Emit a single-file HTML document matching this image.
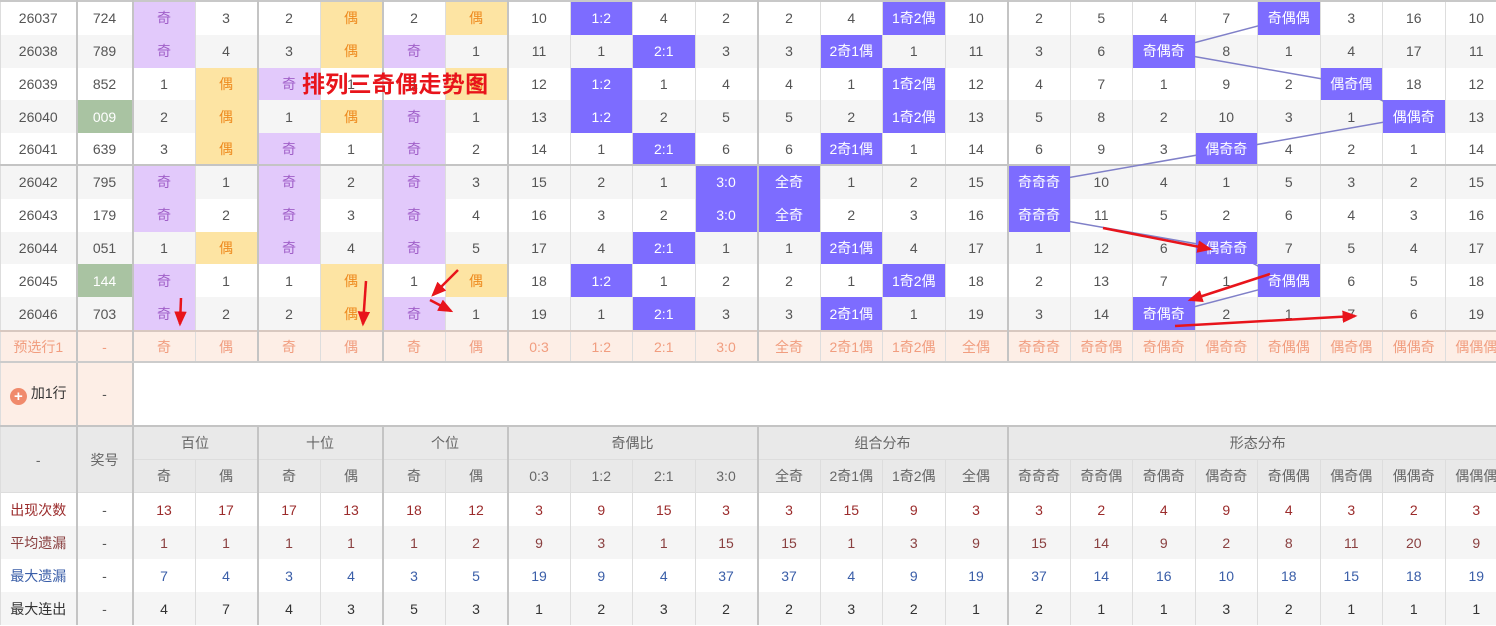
<!DOCTYPE html>
<html><head><meta charset="utf-8"><style>
body{margin:0;width:1496px;height:626px;overflow:hidden;background:#fff;font-family:"Liberation Sans","Noto Sans CJK SC",sans-serif;position:relative}
table{border-collapse:collapse;table-layout:fixed;position:absolute;left:0;top:0;width:1507px;border-top:2px solid #c8c8c8}
td{height:32.8px;padding:0;text-align:center;font-size:14px;color:#555;border:none;border-left:1px solid #ddd;border-right:1px solid #ddd;white-space:nowrap;overflow:hidden}
tr.s td{background:#f5f5f5}
td.L{border-left:2px solid #c4c4c4}
td.p{background:#e2c9fb!important;color:#a05fc8}
td.y{background:#fde4a3!important;color:#ee8a1e}
td.b{background:#7d6cff!important;color:#fff;position:relative;z-index:2}
td.g{background:#a9c3a2!important;color:#fff}
tr.g5 td{border-bottom:2px solid #c4c4c4;height:30.8px}
tr.pre td{background:#fdeee6;color:#f19d7f;border-top:2px solid #d8c8c0;border-bottom:2px solid #ccc;height:29.5px}
tr.h td{background:#e9e9e9;color:#666;border-bottom:1px solid #ddd;height:32px}
tr.st td{height:33px}
.r td{color:#9b2b2b}
.m td{color:#8a4040}
.bl td{color:#3a5ea8}
.k td{color:#333}
.r td:nth-child(2),.m td:nth-child(2),.bl td:nth-child(2),.k td:nth-child(2){color:#555}
svg{position:absolute;left:0;top:0;z-index:1}
svg.t{z-index:5}
</style></head><body>
<table>
<colgroup><col style="width:76px"><col style="width:56px">
<col span="22" style="width:62.5px"></colgroup>
<tr><td>26037</td><td class="L">724</td><td class="L p">奇</td><td>3</td><td class="L">2</td><td class="y">偶</td><td class="L">2</td><td class="y">偶</td><td class="L">10</td><td class="b">1:2</td><td>4</td><td>2</td><td class="L">2</td><td>4</td><td class="b">1奇2偶</td><td>10</td><td class="L">2</td><td>5</td><td>4</td><td>7</td><td class="b">奇偶偶</td><td>3</td><td>16</td><td>10</td></tr>
<tr class="s"><td>26038</td><td class="L">789</td><td class="L p">奇</td><td>4</td><td class="L">3</td><td class="y">偶</td><td class="L p">奇</td><td>1</td><td class="L">11</td><td>1</td><td class="b">2:1</td><td>3</td><td class="L">3</td><td class="b">2奇1偶</td><td>1</td><td>11</td><td class="L">3</td><td>6</td><td class="b">奇偶奇</td><td>8</td><td>1</td><td>4</td><td>17</td><td>11</td></tr>
<tr><td>26039</td><td class="L">852</td><td class="L">1</td><td class="y">偶</td><td class="L p">奇</td><td>1</td><td class="L">1</td><td class="y">偶</td><td class="L">12</td><td class="b">1:2</td><td>1</td><td>4</td><td class="L">4</td><td>1</td><td class="b">1奇2偶</td><td>12</td><td class="L">4</td><td>7</td><td>1</td><td>9</td><td>2</td><td class="b">偶奇偶</td><td>18</td><td>12</td></tr>
<tr class="s"><td>26040</td><td class="L g">009</td><td class="L">2</td><td class="y">偶</td><td class="L">1</td><td class="y">偶</td><td class="L p">奇</td><td>1</td><td class="L">13</td><td class="b">1:2</td><td>2</td><td>5</td><td class="L">5</td><td>2</td><td class="b">1奇2偶</td><td>13</td><td class="L">5</td><td>8</td><td>2</td><td>10</td><td>3</td><td>1</td><td class="b">偶偶奇</td><td>13</td></tr>
<tr class="g5"><td>26041</td><td class="L">639</td><td class="L">3</td><td class="y">偶</td><td class="L p">奇</td><td>1</td><td class="L p">奇</td><td>2</td><td class="L">14</td><td>1</td><td class="b">2:1</td><td>6</td><td class="L">6</td><td class="b">2奇1偶</td><td>1</td><td>14</td><td class="L">6</td><td>9</td><td>3</td><td class="b">偶奇奇</td><td>4</td><td>2</td><td>1</td><td>14</td></tr>
<tr class="s"><td>26042</td><td class="L">795</td><td class="L p">奇</td><td>1</td><td class="L p">奇</td><td>2</td><td class="L p">奇</td><td>3</td><td class="L">15</td><td>2</td><td>1</td><td class="b">3:0</td><td class="L b">全奇</td><td>1</td><td>2</td><td>15</td><td class="L b">奇奇奇</td><td>10</td><td>4</td><td>1</td><td>5</td><td>3</td><td>2</td><td>15</td></tr>
<tr><td>26043</td><td class="L">179</td><td class="L p">奇</td><td>2</td><td class="L p">奇</td><td>3</td><td class="L p">奇</td><td>4</td><td class="L">16</td><td>3</td><td>2</td><td class="b">3:0</td><td class="L b">全奇</td><td>2</td><td>3</td><td>16</td><td class="L b">奇奇奇</td><td>11</td><td>5</td><td>2</td><td>6</td><td>4</td><td>3</td><td>16</td></tr>
<tr class="s"><td>26044</td><td class="L">051</td><td class="L">1</td><td class="y">偶</td><td class="L p">奇</td><td>4</td><td class="L p">奇</td><td>5</td><td class="L">17</td><td>4</td><td class="b">2:1</td><td>1</td><td class="L">1</td><td class="b">2奇1偶</td><td>4</td><td>17</td><td class="L">1</td><td>12</td><td>6</td><td class="b">偶奇奇</td><td>7</td><td>5</td><td>4</td><td>17</td></tr>
<tr><td>26045</td><td class="L g">144</td><td class="L p">奇</td><td>1</td><td class="L">1</td><td class="y">偶</td><td class="L">1</td><td class="y">偶</td><td class="L">18</td><td class="b">1:2</td><td>1</td><td>2</td><td class="L">2</td><td>1</td><td class="b">1奇2偶</td><td>18</td><td class="L">2</td><td>13</td><td>7</td><td>1</td><td class="b">奇偶偶</td><td>6</td><td>5</td><td>18</td></tr>
<tr class="s"><td>26046</td><td class="L">703</td><td class="L p">奇</td><td>2</td><td class="L">2</td><td class="y">偶</td><td class="L p">奇</td><td>1</td><td class="L">19</td><td>1</td><td class="b">2:1</td><td>3</td><td class="L">3</td><td class="b">2奇1偶</td><td>1</td><td>19</td><td class="L">3</td><td>14</td><td class="b">奇偶奇</td><td>2</td><td>1</td><td>7</td><td>6</td><td>19</td></tr>
<tr class="pre"><td>预选行1</td><td class="L">-</td><td class="L">奇</td><td>偶</td><td class="L">奇</td><td>偶</td><td class="L">奇</td><td>偶</td><td class="L">0:3</td><td>1:2</td><td>2:1</td><td>3:0</td><td class="L">全奇</td><td>2奇1偶</td><td>1奇2偶</td><td>全偶</td><td class="L">奇奇奇</td><td>奇奇偶</td><td>奇偶奇</td><td>偶奇奇</td><td>奇偶偶</td><td>偶奇偶</td><td>偶偶奇</td><td>偶偶偶</td></tr>
<tr><td style="height:62px;background:#fdeee6;color:#333;border-bottom:2px solid #c4c4c4"><span style="display:inline-block;width:17px;height:17px;border-radius:50%;background:#f08a6c;color:#fff;font-size:15px;line-height:17px;vertical-align:-3px;margin-right:4px;font-weight:bold">+</span>加1行</td><td class="L" style="background:#fdeee6;border-bottom:2px solid #c4c4c4">-</td><td class="L" colspan="22" style="border-bottom:2px solid #c4c4c4"></td></tr>
<tr class="h"><td rowspan="2">-</td><td class="L" rowspan="2">奖号</td><td class="L" colspan="2">百位</td><td class="L" colspan="2">十位</td><td class="L" colspan="2">个位</td><td class="L" colspan="4">奇偶比</td><td class="L" colspan="4">组合分布</td><td class="L" colspan="8">形态分布</td></tr>
<tr class="h"><td class="L">奇</td><td>偶</td><td class="L">奇</td><td>偶</td><td class="L">奇</td><td>偶</td><td class="L">0:3</td><td>1:2</td><td>2:1</td><td>3:0</td><td class="L">全奇</td><td>2奇1偶</td><td>1奇2偶</td><td>全偶</td><td class="L">奇奇奇</td><td>奇奇偶</td><td>奇偶奇</td><td>偶奇奇</td><td>奇偶偶</td><td>偶奇偶</td><td>偶偶奇</td><td>偶偶偶</td></tr>
<tr class="r st"><td>出现次数</td><td class="L">-</td><td class="L">13</td><td>17</td><td class="L">17</td><td>13</td><td class="L">18</td><td>12</td><td class="L">3</td><td>9</td><td>15</td><td>3</td><td class="L">3</td><td>15</td><td>9</td><td>3</td><td class="L">3</td><td>2</td><td>4</td><td>9</td><td>4</td><td>3</td><td>2</td><td>3</td></tr>
<tr class="m s st"><td>平均遗漏</td><td class="L">-</td><td class="L">1</td><td>1</td><td class="L">1</td><td>1</td><td class="L">1</td><td>2</td><td class="L">9</td><td>3</td><td>1</td><td>15</td><td class="L">15</td><td>1</td><td>3</td><td>9</td><td class="L">15</td><td>14</td><td>9</td><td>2</td><td>8</td><td>11</td><td>20</td><td>9</td></tr>
<tr class="bl st"><td>最大遗漏</td><td class="L">-</td><td class="L">7</td><td>4</td><td class="L">3</td><td>4</td><td class="L">3</td><td>5</td><td class="L">19</td><td>9</td><td>4</td><td>37</td><td class="L">37</td><td>4</td><td>9</td><td>19</td><td class="L">37</td><td>14</td><td>16</td><td>10</td><td>18</td><td>15</td><td>18</td><td>19</td></tr>
<tr class="k s st"><td>最大连出</td><td class="L">-</td><td class="L">4</td><td>7</td><td class="L">4</td><td>3</td><td class="L">5</td><td>3</td><td class="L">1</td><td>2</td><td>3</td><td>2</td><td class="L">2</td><td>3</td><td>2</td><td>1</td><td class="L">2</td><td>1</td><td>1</td><td>3</td><td>2</td><td>1</td><td>1</td><td>1</td></tr>
</table>
<svg width="1496" height="626"><polyline fill="none" stroke="#8080c8" stroke-width="1.5" points="1288,18 1163,51 1351,84 1413,117 1226,150 1038,183 1038,216 1226,249 1288,282 1163,315"/></svg>
<div style="position:absolute;left:302px;top:65px;z-index:6;color:#e8141b;font-weight:bold;font-size:23px;letter-spacing:0.3px">排列三奇偶走势图</div>
<svg class="t" width="1496" height="626"><defs><marker id="a" markerWidth="6" markerHeight="5" refX="5" refY="2.5" orient="auto"><path d="M0,0L6,2.5L0,5z" fill="#e8141b"/></marker></defs>
<g stroke="#e8141b" stroke-width="2.5" marker-end="url(#a)">
<line x1="181" y1="298" x2="180" y2="324"/><line x1="366" y1="281" x2="363" y2="324"/><line x1="458" y1="270" x2="433" y2="295"/><line x1="430" y1="300" x2="451" y2="311"/><line x1="1103" y1="228" x2="1210" y2="249"/><line x1="1270" y1="274" x2="1190" y2="300"/><line x1="1175" y1="326" x2="1355" y2="316"/></g></svg>
</body></html>
